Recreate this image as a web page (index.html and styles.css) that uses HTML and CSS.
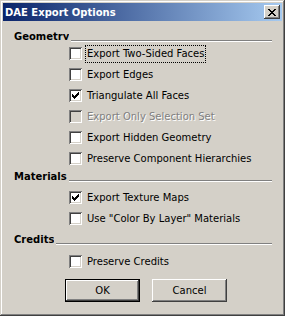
FILE: index.html
```html
<!DOCTYPE html>
<html lang="en">
<head>
    <meta charset="UTF-8">
    <title>DAE Export Options</title>
    <link rel="stylesheet" href="styles.css">
</head>
<body>
    <div class="window">
        <div class="titlebar">
            <span class="title">DAE Export Options</span>
            <span class="close-btn">
                <svg width="8" height="7" viewBox="0 0 8 7" shape-rendering="crispEdges">
                    <path d="M0 0h2v1h-2z M6 0h2v1h-2z M1 1h2v1h-2z M5 1h2v1h-2z M2 2h4v1h-4z M3 3h2v1h-2z M2 4h4v1h-4z M1 5h2v1h-2z M5 5h2v1h-2z M0 6h2v1h-2z M6 6h2v1h-2z" fill="#000"/>
                </svg>
            </span>
        </div>
        <div class="content">
            <div class="group-title"><span class="group-label">Geometry</span><span class="rule"></span></div>
            <div class="options geometry">
                <div class="option"><span class="checkbox"></span><span class="option-text focused">Export Two-Sided Faces</span></div>
                <div class="option"><span class="checkbox"></span><span class="option-text">Export Edges</span></div>
                <div class="option"><span class="checkbox checked"><svg width="7" height="7" viewBox="0 0 7 7" shape-rendering="crispEdges"><path d="M0 2h1v3h-1z M1 3h1v3h-1z M2 4h1v3h-1z M3 3h1v3h-1z M4 2h1v3h-1z M5 1h1v3h-1z M6 0h1v3h-1z" fill="#000"/></svg></span><span class="option-text">Triangulate All Faces</span></div>
                <div class="option disabled"><span class="checkbox"></span><span class="option-text">Export Only Selection Set</span></div>
                <div class="option"><span class="checkbox"></span><span class="option-text">Export Hidden Geometry</span></div>
                <div class="option"><span class="checkbox"></span><span class="option-text">Preserve Component Hierarchies</span></div>
            </div>

            <div class="group-title materials"><span class="group-label">Materials</span><span class="rule"></span></div>
            <div class="options materials-list">
                <div class="option"><span class="checkbox checked"><svg width="7" height="7" viewBox="0 0 7 7" shape-rendering="crispEdges"><path d="M0 2h1v3h-1z M1 3h1v3h-1z M2 4h1v3h-1z M3 3h1v3h-1z M4 2h1v3h-1z M5 1h1v3h-1z M6 0h1v3h-1z" fill="#000"/></svg></span><span class="option-text">Export Texture Maps</span></div>
                <div class="option"><span class="checkbox"></span><span class="option-text">Use "Color By Layer" Materials</span></div>
            </div>

            <div class="group-title credits"><span class="group-label">Credits</span><span class="rule"></span></div>
            <div class="options credits-list">
                <div class="option"><span class="checkbox"></span><span class="option-text">Preserve Credits</span></div>
            </div>

            <div class="buttons">
                <button class="btn default">OK</button>
                <button class="btn">Cancel</button>
            </div>
        </div>
    </div>
</body>
</html>
```

FILE: styles.css
```css
body {
    margin: 0;
    background: #d4d0c8;
    font-family: "DejaVu Sans", Tahoma, sans-serif;
    font-size: 10px;
    color: #000;
}

/* window frame */
.window {
    width: 285px;
    height: 316px;
    box-sizing: border-box;
    padding: 3px;
    background: #d4d0c8;
    box-shadow: inset -1px -1px #404040, inset 1px 1px #d4d0c8,
                inset -2px -2px #808080, inset 2px 2px #ffffff;
}
.titlebar {
    display: flex;
    align-items: center;
    height: 18px;
    padding: 0 2px;
    background: linear-gradient(to right, #0a246a, #a6caf0);
}
.title {
    color: #fff;
    font-weight: bold;
    line-height: 13px;
}
.close-btn {
    margin-left: auto;
    width: 16px;
    height: 14px;
    display: flex;
    align-items: center;
    justify-content: center;
    background: #d4d0c8;
    box-shadow: inset -1px -1px #404040, inset 1px 1px #ffffff,
                inset -2px -2px #808080, inset 2px 2px #d4d0c8;
}
.close-btn svg {
    display: block;
    margin-left: -1px;
}

.content {
    padding: 10px 10px 0 11px;
}

/* section headings */
.group-title {
    display: flex;
    align-items: flex-end;
}
.group-label {
    font-weight: bold;
    line-height: 11px;
    height: 9px;
    overflow: hidden;
    margin-bottom: 1px;
}
.rule {
    flex: 1;
    margin-left: 2px;
    margin-bottom: -1px;
    border-top: 1px solid #808080;
    border-bottom: 1px solid #ffffff;
}
.group-title.materials { margin-top: 2px; }
.group-title.credits { margin-top: 5px; }

/* checkbox rows */
.options {
    padding-left: 55px;
    margin-top: 2px;
}
.options.materials-list { margin-top: 6px; }
.options.credits-list { margin-top: 7px; }
.option {
    display: flex;
    align-items: center;
    height: 21px;
}
.checkbox {
    width: 13px;
    height: 13px;
    flex: none;
    box-sizing: border-box;
    padding: 3px;
    background: #fff;
    box-shadow: inset 1px 1px #808080, inset -1px -1px #ffffff,
                inset 2px 2px #404040, inset -2px -2px #d4d0c8;
}
.checkbox svg {
    display: block;
}
.option-text {
    margin-left: 3px;
    padding: 1px 1px 2px;
    line-height: 13px;
    border: 1px solid transparent;
}
.option-text.focused {
    border: 1px dotted #000;
}
.option.disabled .checkbox {
    background: #d4d0c8;
}
.option.disabled .option-text {
    color: #808080;
    text-shadow: 1px 1px 0 #fff;
}

/* buttons */
.buttons {
    display: flex;
    gap: 12px;
    margin-top: 7px;
    padding-left: 51px;
}
.btn {
    width: 75px;
    height: 23px;
    padding: 0;
    border: none;
    background: #d4d0c8;
    font-family: "DejaVu Sans", Tahoma, sans-serif;
    font-size: 10px;
    color: #000;
    box-shadow: inset -1px -1px #404040, inset 1px 1px #ffffff,
                inset -2px -2px #808080, inset 2px 2px #d4d0c8;
}
.btn.default {
    box-shadow: inset 0 0 0 1px #000,
                inset -2px -2px #404040, inset 2px 2px #ffffff,
                inset -3px -3px #808080;
}
```
